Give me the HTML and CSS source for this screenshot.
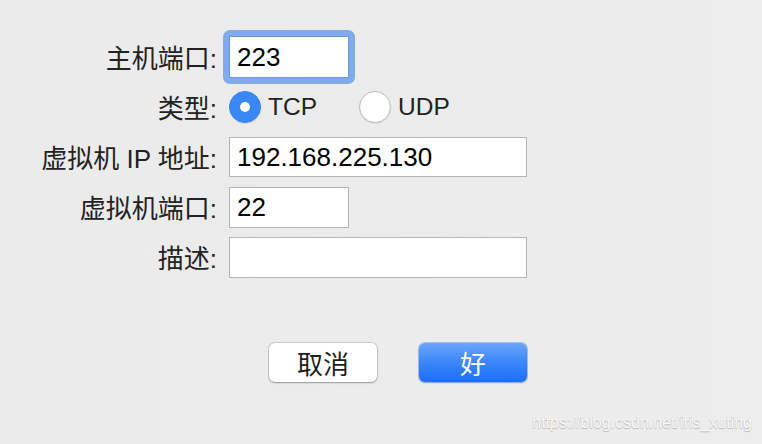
FILE: index.html
```html
<!DOCTYPE html>
<html lang="zh-CN">
<head>
<meta charset="utf-8">
<title>端口转发</title>
<link rel="stylesheet" href="styles.css">
</head>
<body>
<div class="dialog">
  <form class="form">
    <label class="label">主机端口:</label>
    <div class="field">
      <span class="focus-ring"><input class="input input-short input-focus" type="text" value="223"></span>
    </div>

    <span class="label">类型:</span>
    <div class="field radios">
      <label class="option"><input class="radio" type="radio" name="type" checked><span class="option-text">TCP</span></label>
      <label class="option option-second"><input class="radio" type="radio" name="type"><span class="option-text">UDP</span></label>
    </div>

    <label class="label">虚拟机 IP 地址:</label>
    <div class="field">
      <input class="input input-wide input-ip" type="text" value="192.168.225.130">
    </div>

    <label class="label">虚拟机端口:</label>
    <div class="field">
      <input class="input input-short" type="text" value="22">
    </div>

    <label class="label">描述:</label>
    <div class="field">
      <input class="input input-wide" type="text" value="">
    </div>

    <div class="buttons">
      <button type="button" class="btn btn-cancel">取消</button>
      <button type="button" class="btn btn-ok">好</button>
    </div>
  </form>
</div>
<div class="watermark">https://blog.csdn.net/iris_xuting</div>
</body>
</html>
```

FILE: styles.css
```css
html, body {
  margin: 0;
  padding: 0;
  width: 762px;
  height: 444px;
  overflow: hidden;
}

body {
  background: linear-gradient(90deg, #ebebeb 0%, #ececec 60%, #ededed 100%);
  font-family: "Liberation Sans", "Noto Sans CJK SC", sans-serif;
  color: #262626;
  position: relative;
}

.dialog {
  padding-top: 32px;
}

.form {
  display: grid;
  grid-template-columns: 217px 298px;
  grid-auto-rows: 50px;
  column-gap: 12px;
  align-items: center;
}

.label {
  justify-self: end;
  font-size: 26px;
  line-height: 30px;
  padding-top: 4px;
  white-space: nowrap;
  color: #222222;
}

.field {
  display: flex;
  align-items: center;
}

.focus-ring {
  display: inline-block;
  padding: 6px;
  margin: -6px;
  background: #80aaec;
  border-radius: 7px;
  line-height: 0;
}

.input {
  box-sizing: border-box;
  height: 41px;
  margin: 0;
  border: 1px solid #b4b4b4;
  border-radius: 0;
  background: #ffffff;
  padding: 0 7px;
  font-family: "Liberation Sans", "Noto Sans CJK SC", sans-serif;
  font-size: 26px;
  color: #000000;
  outline: none;
}

.input-short {
  width: 120px;
}

.input-wide {
  width: 298px;
}

.input-focus {
  height: 42px;
  border-color: #6e9ae0;
}

.input-ip {
  height: 40px;
}

.radios {
  height: 32px;
}

.option {
  display: flex;
  align-items: center;
}

.option-second {
  margin-left: 42px;
}

.radio {
  appearance: none;
  -webkit-appearance: none;
  box-sizing: border-box;
  width: 32px;
  height: 32px;
  margin: 0;
  border-radius: 50%;
  background: #ffffff;
  border: 1px solid #bdbdbd;
  box-shadow: 0 1px 1px rgba(0, 0, 0, 0.08);
  position: relative;
}

.radio:checked {
  background: #3a88f8;
  border-color: #3a84f0;
}

.radio:checked::after {
  content: "";
  position: absolute;
  left: 10px;
  top: 10px;
  width: 10px;
  height: 10px;
  border-radius: 50%;
  background: #ffffff;
}

.option-text {
  margin-left: 7px;
  font-size: 24.5px;
  line-height: 30px;
  color: #222222;
}

.buttons {
  grid-column: 2;
  align-self: start;
  margin-top: 61px;
  display: flex;
  justify-content: flex-end;
  gap: 42px;
}

.btn {
  box-sizing: border-box;
  width: 108px;
  height: 39px;
  border: none;
  border-radius: 6px;
  font-family: "Noto Sans CJK SC", "Liberation Sans", sans-serif;
  font-size: 26px;
  line-height: 39px;
  padding: 0;
  cursor: default;
}

.btn-cancel {
  background: #ffffff;
  color: #1e1e1e;
  box-shadow: 0 0 0 1px rgba(0, 0, 0, 0.12), 0 1px 2px rgba(0, 0, 0, 0.25);
}

.btn-ok {
  background: linear-gradient(180deg, #6aa6fe 0%, #3b86fb 50%, #1b6ef9 100%);
  color: #ffffff;
  box-shadow: 0 0 0 1px rgba(20, 90, 230, 0.3), 0 1px 2px rgba(0, 0, 0, 0.2);
}

.watermark {
  position: absolute;
  right: 10px;
  top: 414px;
  font-family: "Liberation Sans", sans-serif;
  font-size: 16px;
  line-height: 18px;
  color: #fbfbfb;
  text-shadow: 0 1px 1px rgba(0, 0, 0, 0.22), 0 0 1px rgba(0, 0, 0, 0.15);
  white-space: nowrap;
}
```
